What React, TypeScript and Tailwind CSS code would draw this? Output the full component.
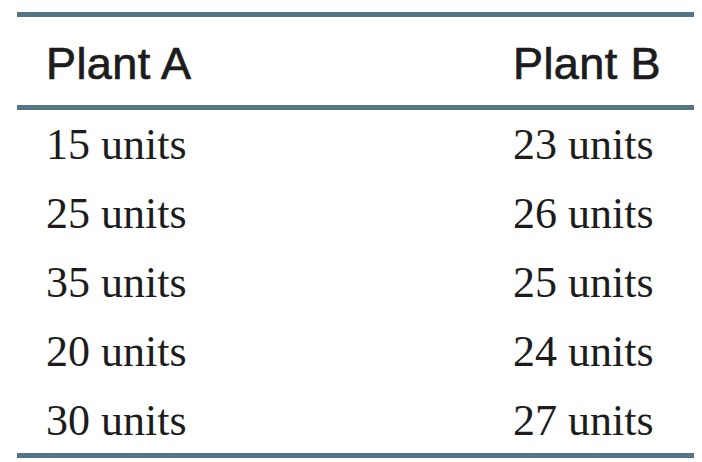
import React from "react";

const rows: [string, string][] = [
  ["15 units", "23 units"],
  ["25 units", "26 units"],
  ["35 units", "25 units"],
  ["20 units", "24 units"],
  ["30 units", "27 units"],
];

export default function App() {
  return (
    <div className="w-[702px] h-[462px] bg-white pt-[12px] pl-[17px]">
      <div className="w-[677px] border-t-[5px] border-b-[5px] border-[#557585] text-[#1c1c1c]">
        <div className="grid grid-cols-[496px_1fr] h-[93px] border-b-[5px] border-[#557585] pt-[24px] text-[45px] leading-[45px] tracking-[0.4px] [-webkit-text-stroke:0.7px_#1c1c1c] font-['Liberation_Sans',Arial,sans-serif]">
          <div className="pl-[29px]">Plant A</div>
          <div>Plant B</div>
        </div>
        {rows.map((r, i) => (
          <div
            key={i}
            className={`grid grid-cols-[496px_1fr] overflow-hidden text-[44px] leading-[69px] font-['Liberation_Serif','Times_New_Roman',serif] ${i === rows.length - 1 ? "h-[67px]" : "h-[69px]"}`}
          >
            <div className="pl-[29px]">{r[0]}</div>
            <div>{r[1]}</div>
          </div>
        ))}
      </div>
    </div>
  );
}
